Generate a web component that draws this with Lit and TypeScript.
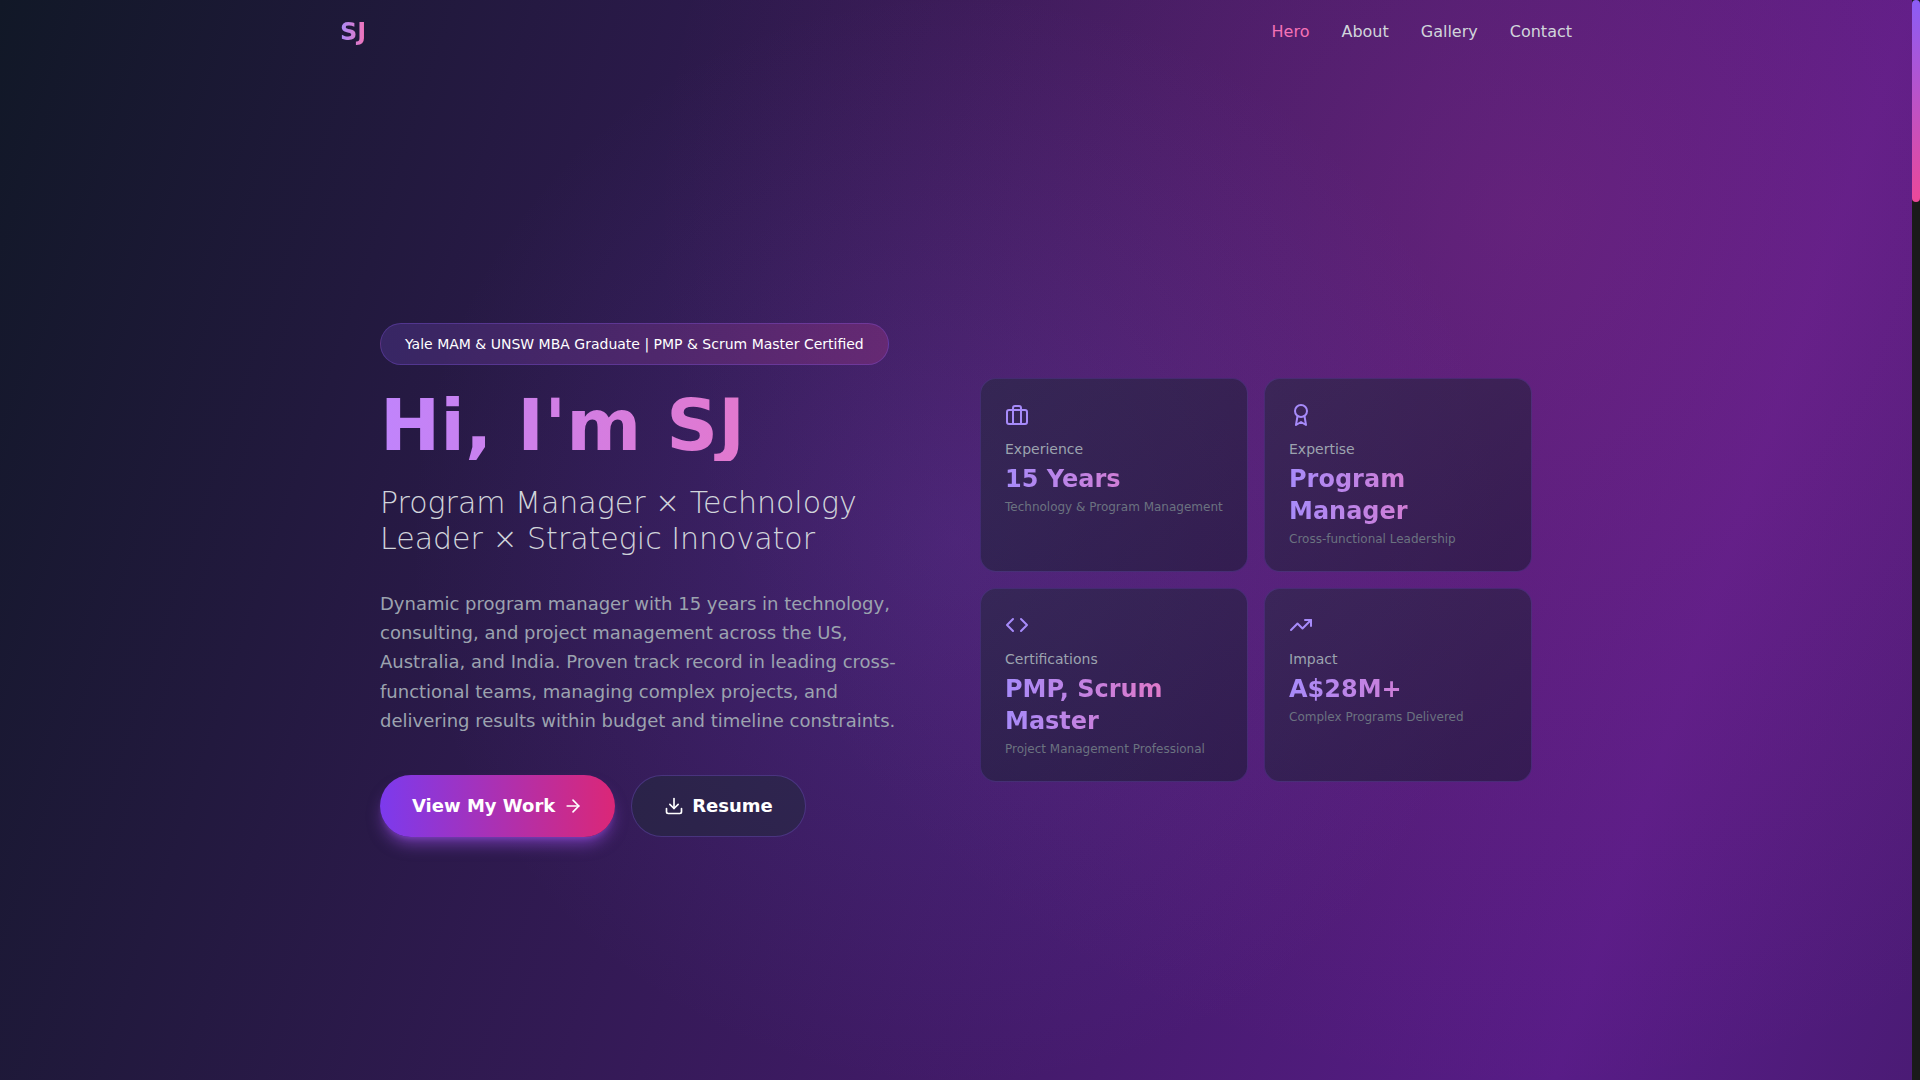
import { LitElement, html, css, svg } from "lit";
import { customElement, state } from "lit/decorators.js";
import { classMap } from "lit/directives/class-map.js";
import { styleMap } from "lit/directives/style-map.js";

const icons = {
  briefcase: svg`<rect width="20" height="14" x="2" y="7" rx="2" ry="2"/><path d="M16 21V5a2 2 0 0 0-2-2h-4a2 2 0 0 0-2 2v16"/>`,
  award: svg`<circle cx="12" cy="8" r="6"/><path d="M15.477 12.89 17 22l-5-3-5 3 1.523-9.11"/>`,
  code: svg`<polyline points="16 18 22 12 16 6"/><polyline points="8 6 2 12 8 18"/>`,
  trend: svg`<polyline points="22 7 13.5 15.5 8.5 10.5 2 17"/><polyline points="16 7 22 7 22 13"/>`,
  arrow: svg`<path d="M5 12h14"/><path d="m12 5 7 7-7 7"/>`,
  download: svg`<path d="M21 15v4a2 2 0 0 1-2 2H5a2 2 0 0 1-2-2v-4"/><polyline points="7 10 12 15 17 10"/><line x1="12" x2="12" y1="15" y2="3"/>`,
};

type IconName = keyof typeof icons;

const icon = (name: IconName, size: number) => html`
  <svg width=${size} height=${size} viewBox="0 0 24 24" fill="none" stroke="currentColor"
    stroke-width="2" stroke-linecap="round" stroke-linejoin="round" aria-hidden="true">${icons[name]}</svg>
`;

interface Stat {
  icon: IconName;
  label: string;
  value: string;
  note: string;
}

const stats: Stat[] = [
  { icon: "briefcase", label: "Experience", value: "15 Years", note: "Technology & Program Management" },
  { icon: "award", label: "Expertise", value: "Program Manager", note: "Cross-functional Leadership" },
  { icon: "code", label: "Certifications", value: "PMP, Scrum Master", note: "Project Management Professional" },
  { icon: "trend", label: "Impact", value: "A$28M+", note: "Complex Programs Delivered" },
];

const sections = ["Hero", "About", "Gallery", "Contact"];

@customElement("app-root")
export class AppRoot extends LitElement {
  @state() private active = "Hero";
  private visibleShare = 18.7;

  static styles = css`
    :host {
      display: grid;
      grid-template-columns: minmax(0, 1fr) 8px;
      min-height: 100vh;
      font-family: "DejaVu Sans", sans-serif;
      font-size: 16px;
      line-height: 24px;
      color: #fff;
    }
    * {
      box-sizing: border-box;
      margin: 0;
    }
    a {
      color: inherit;
      text-decoration: none;
    }
    svg {
      display: block;
      flex: none;
    }
    .page {
      display: flex;
      flex-direction: column;
      background:
        radial-gradient(circle at 50% 50%, rgba(139, 92, 246, 0.15), transparent 50%),
        radial-gradient(circle at 80% 20%, rgba(236, 72, 153, 0.15), transparent 50%),
        linear-gradient(to bottom right, #111827, #581c87, #111827) 0 0 / 100% 535vh no-repeat;
    }
    .bar {
      display: flex;
      align-items: center;
      justify-content: space-between;
      width: 100%;
      max-width: 1280px;
      margin: 0 auto;
      padding: 16px 24px;
    }
    .logo {
      font-size: 24px;
      line-height: 32px;
      font-weight: 700;
    }
    .logo,
    .value {
      color: transparent;
      background: linear-gradient(to right, #a78bfa, #f472b6);
      background-clip: text;
      -webkit-background-clip: text;
    }
    .links {
      display: flex;
      gap: 32px;
      color: #d1d5db;
    }
    .link.active {
      color: #f472b6;
    }
    .hero {
      flex: 1;
      display: grid;
      grid-template-columns: repeat(2, minmax(0, 1fr));
      gap: 48px;
      align-items: center;
      width: 100%;
      max-width: 1200px;
      margin: 0 auto;
      padding: 16px 24px 0;
    }
    .intro {
      display: flex;
      flex-direction: column;
      align-items: stretch;
    }
    .badge {
      align-self: flex-start;
      margin-bottom: 24px;
      padding: 10px 24px;
      border: 1px solid rgba(139, 92, 246, 0.3);
      border-radius: 24px;
      background: linear-gradient(to right, rgba(139, 92, 246, 0.2), rgba(236, 72, 153, 0.2));
      font-size: 14px;
      line-height: 20px;
    }
    h1 {
      margin-bottom: 24px;
      font-size: 72px;
      line-height: 72px;
      font-weight: 700;
      color: transparent;
      background: linear-gradient(to right, #c084fc, #f472b6);
      background-clip: text;
      -webkit-background-clip: text;
    }
    h2 {
      margin-bottom: 32px;
      font-size: 30px;
      line-height: 36px;
      font-weight: 300;
      color: #d1d5db;
    }
    .summary {
      margin-bottom: 40px;
      font-size: 18px;
      line-height: 1.625;
      color: #9ca3af;
    }
    .actions {
      display: flex;
      gap: 16px;
    }
    .button {
      display: flex;
      align-items: center;
      gap: 8px;
      padding: 16px 32px;
      border-radius: 32px;
      font-size: 18px;
      line-height: 28px;
      font-weight: 600;
    }
    .primary {
      background: linear-gradient(to right, #7c3aed, #db2777);
      box-shadow:
        0 10px 15px -3px rgba(168, 85, 247, 0.5),
        0 4px 6px -4px rgba(168, 85, 247, 0.5);
    }
    .secondary {
      border: 1px solid rgba(139, 92, 246, 0.3);
      background: rgba(31, 41, 55, 0.5);
    }
    .stats {
      display: grid;
      grid-template-columns: repeat(2, minmax(0, 1fr));
      gap: 16px;
      list-style: none;
      padding: 0;
    }
    .card {
      display: flex;
      flex-direction: column;
      gap: 4px;
      padding: 24px;
      border: 1px solid rgba(139, 92, 246, 0.2);
      border-radius: 16px;
      background: linear-gradient(to bottom right, rgba(31, 41, 55, 0.5), rgba(17, 24, 39, 0.5));
    }
    .symbol {
      margin-bottom: 8px;
      color: #a78bfa;
    }
    .label {
      font-size: 14px;
      line-height: 20px;
      color: #9ca3af;
    }
    .value {
      font-size: 24px;
      line-height: 32px;
      font-weight: 700;
    }
    .note {
      font-size: 12px;
      line-height: 16px;
      color: #6b7280;
    }
    .track {
      background: #1a1a1a;
    }
    .thumb {
      border-radius: 4px;
      background: linear-gradient(to bottom, #8b5cf6, #ec4899);
    }
  `;

  render() {
    return html`
      <div class="page">
        <header class="bar">
          <a class="logo" href="#hero">SJ</a>
          <nav class="links" aria-label="Sections">
            ${sections.map(
              (name) => html`<a
                class=${classMap({ link: true, active: name === this.active })}
                href="#${name.toLowerCase()}"
                @click=${() => (this.active = name)}
              >${name}</a>`,
            )}
          </nav>
        </header>
        <main class="hero" id="hero">
          <section class="intro">
            <p class="badge">Yale MAM &amp; UNSW MBA Graduate | PMP &amp; Scrum Master Certified</p>
            <h1>Hi, I'm SJ</h1>
            <h2>Program Manager × Technology Leader × Strategic Innovator</h2>
            <p class="summary">
              Dynamic program manager with 15 years in technology, consulting, and project
              management across the US, Australia, and India. Proven track record in leading
              cross-functional teams, managing complex projects, and delivering results within
              budget and timeline constraints.
            </p>
            <div class="actions">
              <a class="button primary" href="#gallery">View My Work ${icon("arrow", 20)}</a>
              <a class="button secondary" href="#resume">${icon("download", 20)} Resume</a>
            </div>
          </section>
          <ul class="stats">
            ${stats.map(
              (stat) => html`<li class="card">
                <span class="symbol">${icon(stat.icon, 24)}</span>
                <span class="label">${stat.label}</span>
                <strong class="value">${stat.value}</strong>
                <span class="note">${stat.note}</span>
              </li>`,
            )}
          </ul>
        </main>
      </div>
      <div class="track" aria-hidden="true">
        <div class="thumb" style=${styleMap({ height: `${this.visibleShare}%` })}></div>
      </div>
    `;
  }
}
